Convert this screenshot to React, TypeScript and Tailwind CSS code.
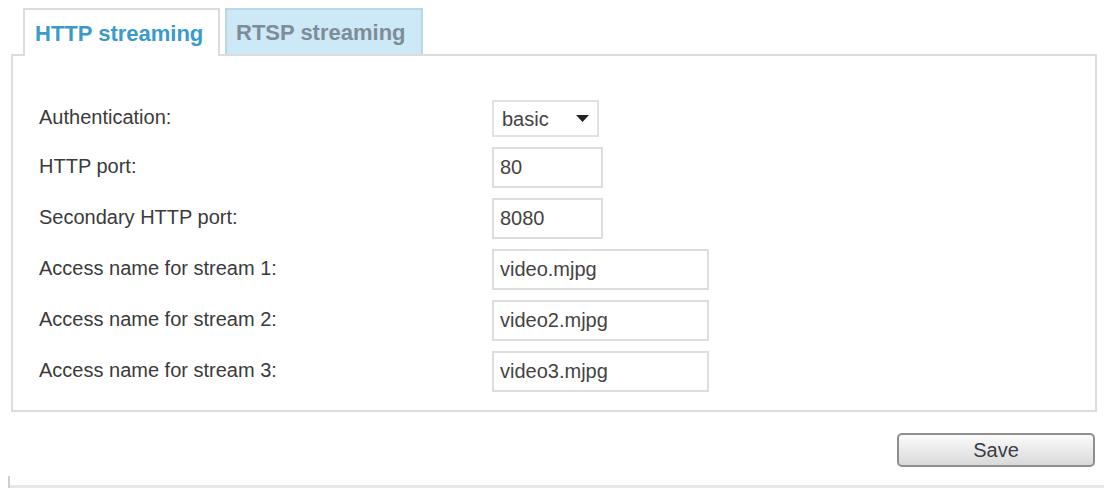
import { useState } from 'react';

const font = { fontFamily: '"Liberation Sans", Arial, sans-serif' };

function Field({ label, children }: { label: string; children: React.ReactNode }) {
  return (
    <div className="flex items-center">
      <div className="w-[479px] pl-[26px] text-[20px] text-[#3b3b3b] -mt-[3px]">{label}</div>
      {children}
    </div>
  );
}

function TextBox({ value, width }: { value: string; width: string }) {
  return (
    <input
      readOnly
      value={value}
      className={`${width} h-[41px] border-2 border-[#dddddd] bg-white px-[6px] text-[20px] text-[#444444] outline-none`}
      style={font}
    />
  );
}

export default function App() {
  const [tab, setTab] = useState<'http' | 'rtsp'>('http');

  return (
    <div className="w-[1104px] h-[490px] bg-white overflow-hidden" style={font}>
      <div className="flex gap-[5px] pl-[23px] pt-[8px]">
        <button
          onClick={() => setTab('http')}
          className="w-[197px] h-[48px] -mb-[2px] border-2 border-b-0 border-[#dcdcdc] bg-white text-left pl-[10px] text-[22px] font-bold text-[#3a9bcb] relative z-10"
        >
          HTTP streaming
        </button>
        <button
          onClick={() => setTab('rtsp')}
          className="w-[198px] h-[46px] border-2 border-b-0 border-[#bcd6e4] bg-[#cde8f6] text-left pl-[9px] text-[22px] font-bold text-[#7d8d98]"
        >
          RTSP streaming
        </button>
      </div>

      <div className="ml-[11px] w-[1086px] border-2 border-[#dcdcdc] pt-[44px] pb-[18px] flex flex-col gap-[10px]">
        <Field label="Authentication:">
          <div className="w-[107px] h-[37px] border-2 border-[#e2e2e2] flex items-center justify-between pl-[8px] pr-[8px] text-[20px] text-[#444444]">
            <span>basic</span>
            <svg width="13" height="7" viewBox="0 0 13 7">
              <path d="M0 0H13L6.5 7Z" fill="#222222" />
            </svg>
          </div>
        </Field>
        <Field label="HTTP port:">
          <TextBox value="80" width="w-[111px]" />
        </Field>
        <Field label="Secondary HTTP port:">
          <TextBox value="8080" width="w-[111px]" />
        </Field>
        <Field label="Access name for stream 1:">
          <TextBox value="video.mjpg" width="w-[217px]" />
        </Field>
        <Field label="Access name for stream 2:">
          <TextBox value="video2.mjpg" width="w-[217px]" />
        </Field>
        <Field label="Access name for stream 3:">
          <TextBox value="video3.mjpg" width="w-[217px]" />
        </Field>
      </div>

      <div className="flex justify-end pr-[9px] mt-[21px]">
        <button className="w-[198px] h-[34px] rounded-[5px] border-2 border-[#8f8f8f] bg-gradient-to-b from-[#fbfbfb] to-[#d9d9d9] text-[20px] text-[#3a3d45]">
          Save
        </button>
      </div>

      <div className="ml-[8px] mt-[9px] h-[12px] border-l-2 border-[#cfcfcf] flex flex-col justify-end">
        <div className="h-[3px] bg-[#e6e6e6]" />
      </div>
    </div>
  );
}
